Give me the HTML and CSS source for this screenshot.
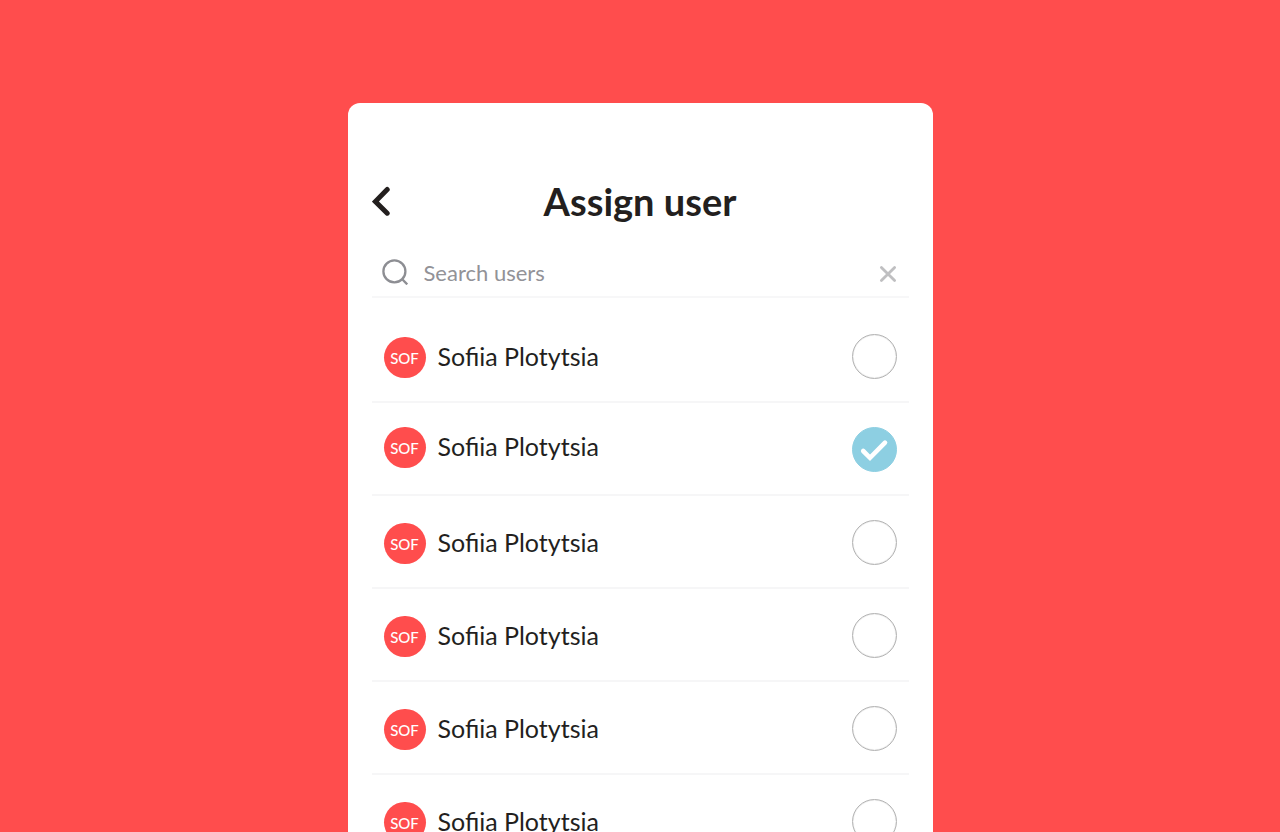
FILE: index.html
```html
<!DOCTYPE html>
<html lang="en">
<head>
<meta charset="utf-8">
<meta name="viewport" content="width=device-width, initial-scale=1">
<title>Assign user</title>
<link rel="stylesheet" href="styles.css">
</head>
<body>
<main class="card">
  <header class="header">
    <button class="icon-button back" type="button" aria-label="Back">
      <svg width="18" height="30" viewBox="0 0 18 30" fill="none" stroke="#231f1e" stroke-width="5" stroke-linecap="round" stroke-linejoin="miter"><path d="M15.2 3.5 3.4 15.5 15.2 27.2"/></svg>
    </button>
    <h1 class="title">Assign user</h1>
  </header>
  <form class="search" role="search">
    <label class="search-icon" for="search" aria-label="Search users">
      <svg width="26" height="26" viewBox="0 0 26 26" fill="none" stroke="#8d8e93" stroke-width="2.3"><circle cx="12.4" cy="12.4" r="11"/><path d="m19.8 19.8 5.4 5.6"/></svg>
    </label>
    <input class="search-input" id="search" type="text" placeholder="Search users">
    <button class="icon-button clear" type="reset" aria-label="Clear search">
      <svg width="18" height="18" viewBox="0 0 18 18" fill="none" stroke="#bfbfc1" stroke-width="2.8" stroke-linecap="round"><path d="m2.4 2.4 13.2 13.2M15.6 2.4 2.4 15.6"/></svg>
    </button>
  </form>
  <ul class="users">
    <li><label class="user"><span class="person"><span class="avatar">SOF</span><span class="name">Sofiia Plotytsia</span></span><span class="check"><input type="checkbox"><svg viewBox="0 0 45 45"><path d="m11.2 24 6.8 6.8L33 15.6"/></svg></span></label></li>
    <li><label class="user user-selected"><span class="person"><span class="avatar">SOF</span><span class="name">Sofiia Plotytsia</span></span><span class="check"><input type="checkbox" checked><svg viewBox="0 0 45 45"><path d="m11.2 24 6.8 6.8L33 15.6"/></svg></span></label></li>
    <li><label class="user"><span class="person"><span class="avatar">SOF</span><span class="name">Sofiia Plotytsia</span></span><span class="check"><input type="checkbox"><svg viewBox="0 0 45 45"><path d="m11.2 24 6.8 6.8L33 15.6"/></svg></span></label></li>
    <li><label class="user"><span class="person"><span class="avatar">SOF</span><span class="name">Sofiia Plotytsia</span></span><span class="check"><input type="checkbox"><svg viewBox="0 0 45 45"><path d="m11.2 24 6.8 6.8L33 15.6"/></svg></span></label></li>
    <li><label class="user"><span class="person"><span class="avatar">SOF</span><span class="name">Sofiia Plotytsia</span></span><span class="check"><input type="checkbox"><svg viewBox="0 0 45 45"><path d="m11.2 24 6.8 6.8L33 15.6"/></svg></span></label></li>
    <li><label class="user"><span class="person"><span class="avatar">SOF</span><span class="name">Sofiia Plotytsia</span></span><span class="check"><input type="checkbox"><svg viewBox="0 0 45 45"><path d="m11.2 24 6.8 6.8L33 15.6"/></svg></span></label></li>
  </ul>
</main>
</body>
</html>
```
FILE: styles.css
```css
* {
  box-sizing: border-box;
}

body {
  display: flex;
  justify-content: center;
  height: 100vh;
  margin: 0;
  padding-top: 103px;
  background: #ff4d4d;
  color: #231f1e;
  font-family: Lato, "Liberation Sans", sans-serif;
}

.card {
  display: flex;
  flex-direction: column;
  width: 100%;
  max-width: 585px;
  padding: 74px 24px 0;
  border-radius: 12px 12px 0 0;
  background: #fff;
}

.icon-button {
  display: flex;
  padding: 0;
  border: 0;
  background: none;
  cursor: pointer;
}

.header {
  display: grid;
  grid-template-columns: 1fr auto 1fr;
  align-items: center;
}

.back {
  justify-self: start;
}

.title {
  margin: 0;
  font-size: 38px;
  font-weight: 700;
  line-height: 48px;
}

.search {
  display: flex;
  align-items: center;
  gap: 16px;
  margin-top: 23px;
  padding: 0 12px 0 10px;
  border-bottom: 2px solid #f7f7f8;
}

.search-icon {
  display: flex;
}

.clear {
  padding-top: 4px;
}

.search-input {
  flex: 1;
  min-width: 0;
  height: 48px;
  padding: 0;
  border: 0;
  outline: 0;
  background: none;
  color: inherit;
  font-family: inherit;
  font-size: 22px;
}

.search-input::placeholder {
  color: #929297;
  opacity: 1;
}

.users {
  flex: 1;
  min-height: 0;
  margin: 0;
  padding: 12px 0 0;
  overflow-y: auto;
  scrollbar-width: none;
  list-style: none;
}

.user {
  display: flex;
  align-items: center;
  justify-content: space-between;
  padding: 24px 12px 22px;
  border-bottom: 2px solid #f6f6f7;
  cursor: pointer;
}

.person {
  display: flex;
  align-items: flex-start;
  gap: 12px;
  padding-top: 2px;
}

.user-selected {
  align-items: flex-start;
}

.user-selected .person {
  padding-top: 0;
}

.avatar {
  display: grid;
  place-items: center;
  width: 42px;
  height: 41px;
  border-radius: 21px;
  background: #ff4d4d;
  color: #fff;
  font-size: 15px;
  font-weight: 500;
}

.name {
  font-size: 25px;
  line-height: 39px;
}

.check {
  display: grid;
}

.check input,
.check svg {
  grid-area: 1 / 1;
  width: 45px;
  height: 45px;
  margin: 0;
}

.check input {
  appearance: none;
  border: 1px solid #b4b4b4;
  border-radius: 50%;
  box-shadow: inset 0 0 1px #b4b4b4;
  cursor: pointer;
}

.check svg {
  visibility: hidden;
  pointer-events: none;
  fill: none;
  stroke: #fff;
  stroke-width: 4.6;
  stroke-linecap: round;
}

.check input:checked {
  border-color: #8dcfe2;
  background: #8dcfe2;
  box-shadow: none;
}

.check input:checked + svg {
  visibility: visible;
}
```
